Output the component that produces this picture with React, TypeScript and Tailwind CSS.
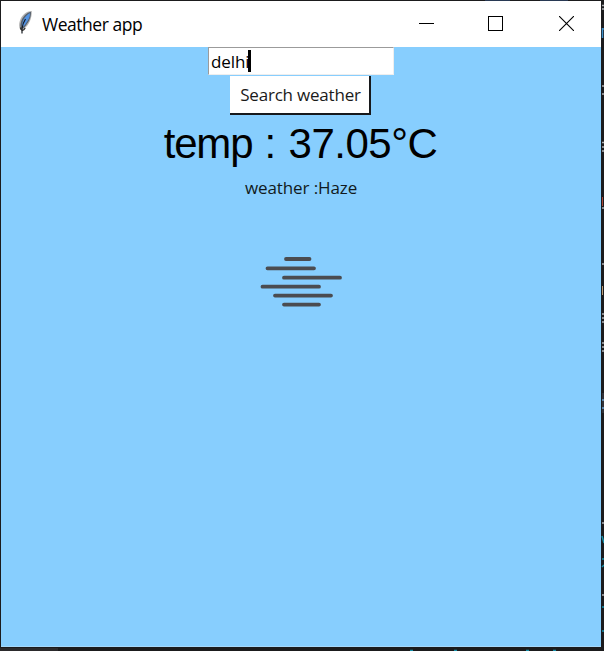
function Feather() {
  return (
    <svg className="h-[26px] w-4 shrink-0" viewBox="0 0 16 26" fill="none">
      <path d="M14.800 1C9 1 4.500 5.500 2.800 11c-1 3-1 6 .3 8.500 1.500.5 3.500.3 5-1.500C12 14.500 15 8.500 14.800 1Z" fill="#b4b4b4" />
      <path d="M14 1.800C9.500 2.500 5.500 7 4 12c-.8 2.500-.8 5 0 6.800 1.500.2 3-.5 4-2.200C11 13 14.300 8 14 1.800Z" fill="#56616e" />
      <path d="M13 3.200C9.500 4.500 6.500 8.500 5.300 13c-.4 1.500-.4 3 0 4 1.400-.5 2.400-1.500 3.400-3.200C11 10.500 13.200 7 13 3.200Z" fill="#5393e3" />
      <path d="M8.500 9C6.500 12 5.500 15 5 18.500v5" stroke="#15191f" strokeWidth="1.200" />
      <path d="M3.500 17.500c.3 2 .8 2.800 2 2.800s2-1 2.700-2.300" stroke="#222" strokeWidth="1.200" />
    </svg>
  );
}

function TitleBar() {
  return (
    <header className="flex h-[46px] items-center bg-white pb-[2px] pl-4">
      <Feather />
      <h1 className="ml-[9px] grow whitespace-nowrap pt-[2px] font-['Open_Sans',sans-serif] text-[17.5px] leading-6 tracking-[-0.47px]">Weather app</h1>
      <div className="flex shrink-0 items-center pr-[27px]">
        <button aria-label="Minimize" className="mr-[54px] h-px w-[15px] bg-black" />
        <button aria-label="Maximize" className="mr-[56px] size-[15px] border border-black" />
        <button aria-label="Close">
          <svg className="block size-[15px]" viewBox="0 0 15 15" stroke="#000" strokeWidth="1.100">
            <path d="M0 0 15 15M15 0 0 15" />
          </svg>
        </button>
      </div>
    </header>
  );
}

function HazeIcon() {
  return (
    <svg className="mt-[55px] h-[52px] w-[84px]" viewBox="0 0 84 52" stroke="#4b4c50" strokeWidth="3.800" strokeLinecap="round">
      <path d="M27 4H50.500M8.500 13.300H55M25 22.700H81M3.500 31.700H60M16 40.600H72M25 49.600H60" />
    </svg>
  );
}

/* Slivers of the editor window that lies behind the app. */
function EditorEdge() {
  return (
    <svg className="absolute inset-0 h-[651px] w-[604px]" viewBox="0 0 604 651" fill="none">
      <path d="M602 5.500h2M602 9h2M602 86h2M602 94h2M602 142.500h2M602 147h2M602 151h2M602 208h2M602 264h2M602 314h2M602 318h2M602 322h2M602 343h2M602 347h2M602 351h2M602 523h2M602 595h2" stroke="#aeb0b4" strokeWidth="1.500" />
      <path d="M602.500 28v10M602 29h2" stroke="#3e8fc9" strokeWidth="1.500" />
      <path d="M602.500 197v9" stroke="#a84437" />
      <path d="M602.500 286v9" stroke="#b99a75" />
      <path d="M602 393h2v20h-2z" fill="#303239" />
      <path d="M602 400h2M602 408h2" stroke="#5b83a8" strokeWidth="2" />
      <path d="m602 536 2 7M602 559h2M602 567l2-2M602 607h2M602 631h2M410 650.500h3M454 650.500h3M526 650.500h3M553 650.500h3" stroke="#168fa8" strokeWidth="1.500" />
      <path d="M0 648h58v3H0z" fill="#2b2a2c" />
      <path d="M485 .5h25M540 .5h28" stroke="#283953" />
    </svg>
  );
}

export default function App() {
  return (
    <div className="relative h-[651px] w-[604px] overflow-hidden bg-[#1b1b1d] pl-px pt-px text-black">
      <EditorEdge />
      <div className="relative h-[646px] w-[600px]">
        <TitleBar />
        <main className="flex h-[600px] flex-col items-center border-b border-[#a4d8fb] bg-[#87cefe]">
          <div className="flex h-7 w-[186px] items-center border border-b-[#eee] border-l-[#9b9b9b] border-r-[#eee] border-t-[#9b9b9b] bg-white pl-[2px] font-['Open_Sans',sans-serif] text-[17px]">
            <span className="pt-px text-[17px] leading-6 tracking-[-0.1px]">delhi</span>
            <span className="-ml-px h-[22px] w-[3px] bg-black" />
          </div>
          <button className="mr-px mt-px h-[39px] w-[141px] whitespace-nowrap border-b-2 border-r-2 border-b-[#17191c] border-r-[#17191c] bg-white pl-[2px] pt-px font-['Open_Sans',sans-serif] text-[17px] tracking-[-0.2px] text-[#1a1a1a]">
            Search weather
          </button>
          <p className="mt-[5px] whitespace-nowrap pr-px font-['Liberation_Sans',Arial,sans-serif] text-[42px] leading-[48px]">
            <span className="tracking-[-1.200px]">temp</span>
            <span className="tracking-[0.4px]"> : </span>
            <span className="tracking-[-0.500px]">37.05°C</span>
          </p>
          <p className="mt-[8px] whitespace-nowrap font-['Open_Sans',sans-serif] text-[17px] leading-6 tracking-[-0.1px] text-[#111a20]">weather :Haze</p>
          <HazeIcon />
        </main>
      </div>
    </div>
  );
}
